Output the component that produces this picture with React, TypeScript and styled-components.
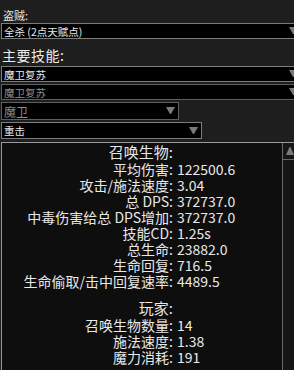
import React from "react";
import styled, { createGlobalStyle } from "styled-components";

const Global = createGlobalStyle`
  html, body {
    margin: 0;
    padding: 0;
    background: #1e1e1e;
    overflow: hidden;
  }
  body {
    width: 294px;
    height: 370px;
    font-family: "Noto Sans CJK SC", "Noto Sans", sans-serif;
    color: #e6e6e6;
  }
`;

const Page = styled.div`
  display: flex;
  flex-direction: column;
  padding-left: 1px;
  width: 320px;
`;

const FieldLabel = styled.div`
  font-size: 11px;
  line-height: 14px;
  margin: 8px 0 1px 2px;
  color: #e6e6e6;
`;

const SectionLabel = styled.div`
  font-size: 14px;
  line-height: 18px;
  margin: 7px 0 2px 1px;
  letter-spacing: 0.5px;
  color: #ececec;
`;

const SelectStack = styled.div`
  display: flex;
  flex-direction: column;
  gap: 2px;
`;

const SelectBox = styled.div<{ $w: number; $h: number; $size: number; $dim?: boolean }>`
  box-sizing: border-box;
  width: ${(p) => p.$w}px;
  height: ${(p) => p.$h}px;
  background: #000;
  border: 1px solid ${(p) => (p.$dim ? "#5e5e5e" : "#7c7c7c")};
  display: flex;
  align-items: center;
  justify-content: space-between;
  padding: 0 3px 0 2px;
  font-size: ${(p) => p.$size}px;
  color: ${(p) => (p.$dim ? "#8c8c8c" : "#e8e8e8")};
  white-space: nowrap;
  overflow: hidden;
`;

const Arrow = styled.svg`
  flex: none;
  width: 9px;
  height: 8px;
`;

const Panel = styled.div`
  margin-top: 3px;
  width: 310px;
  height: 240px;
  box-sizing: border-box;
  border: 1px solid #9a9a9a;
  background: #0e0e0e;
  display: flex;
`;

const Content = styled.div`
  width: 280px;
  flex: none;
  display: flex;
  flex-direction: column;
`;

const Row = styled.div<{ $head?: boolean }>`
  display: grid;
  grid-template-columns: 171px auto;
  column-gap: 4px;
  font-size: ${(p) => (p.$head ? 15 : 14)}px;
  line-height: ${(p) => (p.$head ? 18 : 16)}px;
  white-space: nowrap;
  color: #e8e8e8;
`;

const Key = styled.span`
  text-align: right;
`;

const Val = styled.span``;

const Spacer = styled.div`
  height: 10px;
`;

const ScrollBar = styled.div`
  width: 14px;
  flex: none;
  border-left: 1px solid #6a6a6a;
  background: #161616;
  display: flex;
  flex-direction: column;
`;

const ScrollBtn = styled.div`
  height: 16px;
  border-bottom: 1px solid #6a6a6a;
  display: flex;
  align-items: center;
  padding-left: 3px;
`;

const DownArrow = () => (
  <Arrow viewBox="0 0 9 8">
    <polygon points="0,0 9,0 5,7 4,7" fill="#7a7a7a" />
  </Arrow>
);

const UpArrow = styled.svg`
  width: 8px;
  height: 8px;
`;

type Stat = [string, string];

const summon: Stat[] = [
  ["平均伤害:", "122500.6"],
  ["攻击/施法速度:", "3.04"],
  ["总 DPS:", "372737.0"],
  ["中毒伤害给总 DPS增加:", "372737.0"],
  ["技能CD:", "1.25s"],
  ["总生命:", "23882.0"],
  ["生命回复:", "716.5"],
  ["生命偷取/击中回复速率:", "4489.5"],
];

const player: Stat[] = [
  ["召唤生物数量:", "14"],
  ["施法速度:", "1.38"],
  ["魔力消耗:", "191"],
];

export default function App() {
  return (
    <>
      <Global />
      <Page>
        <FieldLabel>盗贼:</FieldLabel>
        <SelectBox $w={301} $h={16} $size={10.5}>
          <span>全杀 (2点天赋点)</span>
          <DownArrow />
        </SelectBox>
        <SectionLabel>主要技能:</SectionLabel>
        <SelectStack>
          <SelectBox $w={301} $h={16} $size={10.5}>
            <span>魔卫复苏</span>
            <DownArrow />
          </SelectBox>
          <SelectBox $w={301} $h={16} $size={10.5} $dim>
            <span>魔卫复苏</span>
            <DownArrow />
          </SelectBox>
          <SelectBox $w={178} $h={18} $size={12} $dim>
            <span>魔卫</span>
            <DownArrow />
          </SelectBox>
          <SelectBox $w={201} $h={17} $size={10.5}>
            <span>重击</span>
            <DownArrow />
          </SelectBox>
        </SelectStack>
        <Panel>
          <Content>
            <Row $head>
              <Key>召唤生物:</Key>
              <Val />
            </Row>
            {summon.map(([k, v]) => (
              <Row key={k}>
                <Key>{k}</Key>
                <Val>{v}</Val>
              </Row>
            ))}
            <Spacer />
            <Row $head>
              <Key>玩家:</Key>
              <Val />
            </Row>
            {player.map(([k, v]) => (
              <Row key={k}>
                <Key>{k}</Key>
                <Val>{v}</Val>
              </Row>
            ))}
          </Content>
          <ScrollBar>
            <ScrollBtn>
              <UpArrow viewBox="0 0 8 8">
                <polygon points="3.5,0 4.5,0 8,8 0,8" fill="#7a7a7a" />
              </UpArrow>
            </ScrollBtn>
          </ScrollBar>
        </Panel>
      </Page>
    </>
  );
}
